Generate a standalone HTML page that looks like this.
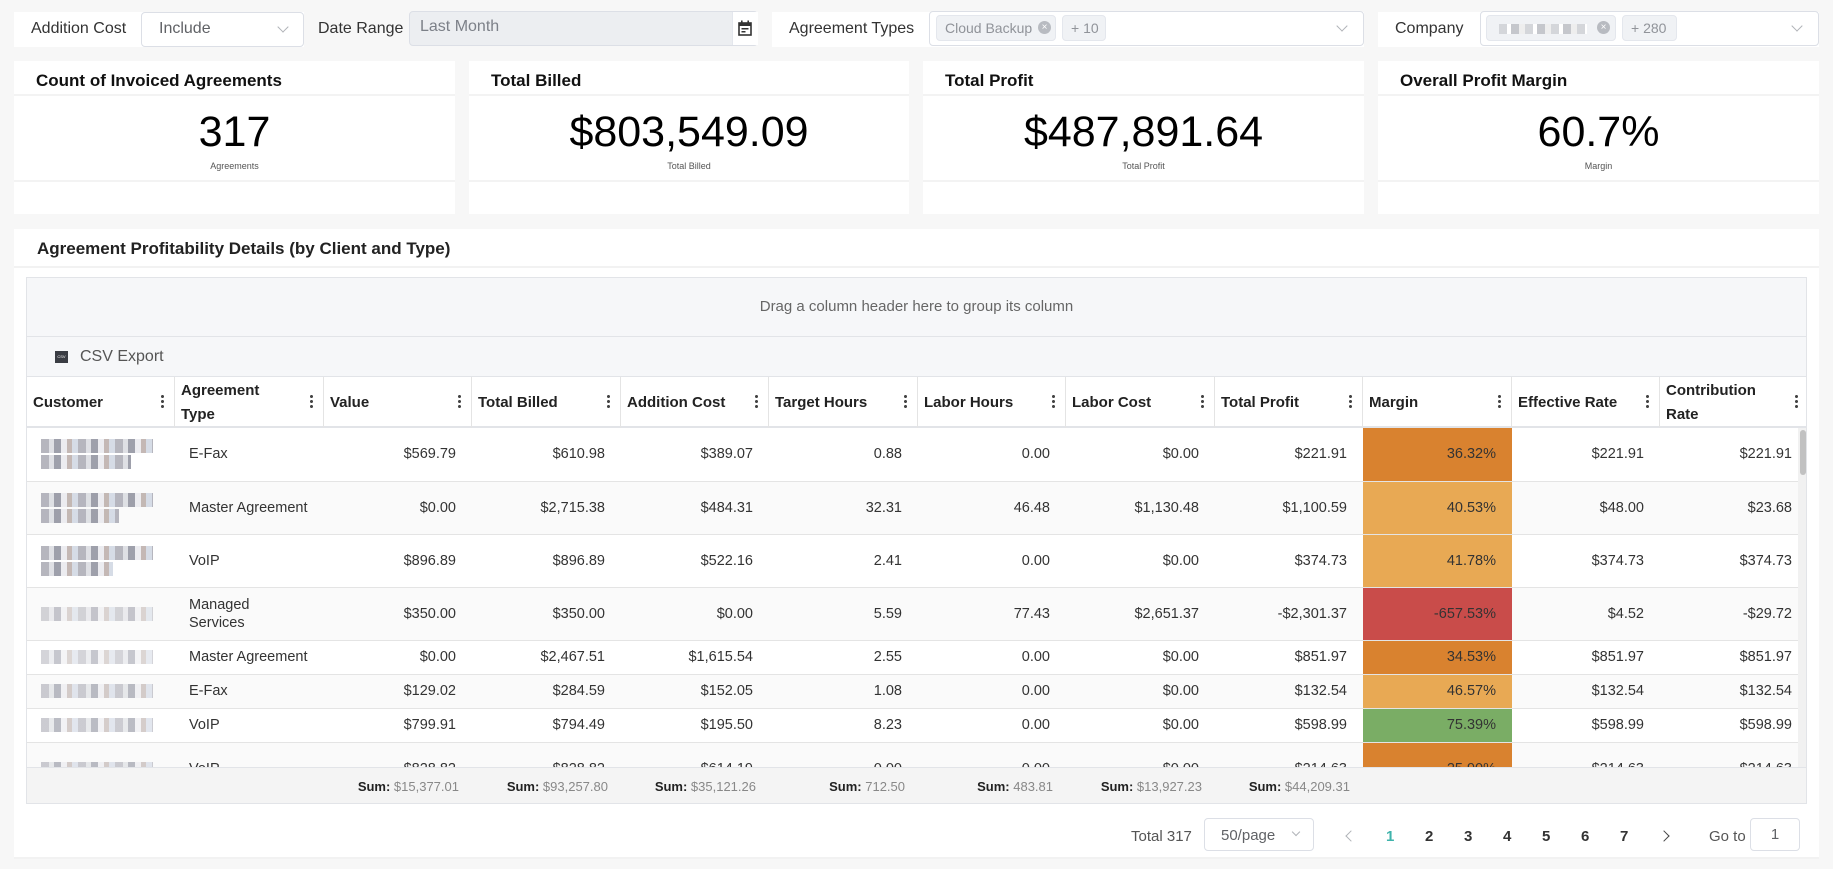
<!DOCTYPE html>
<html><head><meta charset="utf-8"><style>
*{box-sizing:border-box;margin:0;padding:0}
body{width:1833px;height:869px;background:#f7f7f7;font-family:"Liberation Sans",sans-serif;color:#222;position:relative;overflow:hidden}
.abs{position:absolute}
.box{position:absolute;background:#fff}
.lbl{position:absolute;font-size:16px;color:#333}
.inp{position:absolute;border:1px solid #dcdfe6;border-radius:4px;background:#fff;font-size:16px;color:#606266}
.chev{position:absolute;width:8px;height:8px;border-right:1.3px solid #b0b3b8;border-bottom:1.3px solid #b0b3b8;transform:rotate(45deg)}
.tag{position:absolute;background:#f0f2f5;border:1px solid #e4e7ed;border-radius:4px;font-size:14px;color:#909399;height:26px;line-height:24px;padding:0 8px;white-space:nowrap}
.card h3{position:absolute;left:22px;top:10px;font-size:17px;font-weight:bold;color:#111}
.card .big{position:absolute;left:0;right:0;top:47px;text-align:center;font-size:43px;color:#000}
.card .cap{position:absolute;left:0;right:0;top:100px;text-align:center;font-size:9px;color:#555}
.card .l1{position:absolute;left:0;right:0;top:33px;height:2px;background:#f3f3f3}
.card .l2{position:absolute;left:0;right:0;top:119px;height:2px;background:#f3f3f3}
table{border-collapse:collapse;table-layout:fixed;position:absolute;left:0;top:0}
td{font-size:14.5px;color:#333;text-align:right;padding:0 16px 0 12px;border-bottom:1px solid #e4e4e4;overflow:hidden;white-space:nowrap}
td.t{text-align:left;line-height:18px;padding-left:14px;padding-right:4px}
.th{position:absolute;top:0;height:51px;border-right:1px solid #e4e4e4;font-size:15px;font-weight:bold;color:#222;padding:0 0 0 6px;display:flex;align-items:center;line-height:24px}
.kb{position:absolute;right:10px;top:17px;width:3px;height:15px;background:radial-gradient(circle,#444 1.4px,transparent 1.6px) 0 0/3px 5px repeat-y}
.cust{display:block;height:14px;width:112px;margin:2px 0;background:repeating-linear-gradient(90deg,#a9a9b3 0 8px,#d9dbe0 8px 13px,#8d8f9c 13px 20px,#e9e9ee 20px 26px,#b9aca8 26px 31px,#cfd6e2 31px 37px);opacity:.85}
.sum{position:absolute;top:0;height:38px;line-height:38px;font-size:13px;color:#888;text-align:right}
.sum b{color:#222}
.pg{position:absolute;top:828px;font-size:15px;font-weight:bold;color:#333}
</style></head><body>

<div class="box" style="left:14px;top:12px;width:290px;height:35px"></div>
<div class="lbl" style="left:31px;top:20px">Addition Cost</div>
<div class="inp" style="left:141px;top:12px;width:163px;height:35px"><span class="abs" style="left:17px;top:7px">Include</span><span class="chev" style="left:137px;top:10px"></span></div>
<div class="lbl" style="left:318px;top:20px">Date Range</div>
<div class="inp" style="left:409px;top:11px;width:349px;height:35px;background:#eceef1"><span class="abs" style="left:10px;top:6px;color:#7c8088">Last Month</span>
<div class="abs" style="left:322px;top:0;width:26px;height:33px;background:#fff;border-left:1px solid #e4e7ed"></div>
<svg class="abs" style="left:328px;top:8px" width="14" height="16" viewBox="0 0 14 16"><rect x="1" y="3" width="12" height="12" fill="none" stroke="#333" stroke-width="1.6"/><rect x="1" y="3" width="12" height="3" fill="#333"/><rect x="3" y="0.5" width="1.6" height="4" fill="#333"/><rect x="9.4" y="0.5" width="1.6" height="4" fill="#333"/><rect x="3.5" y="8" width="7" height="1.5" fill="#333"/><rect x="3.5" y="11" width="4" height="1.5" fill="#333"/></svg></div>
<div class="box" style="left:772px;top:12px;width:592px;height:35px"></div>
<div class="lbl" style="left:789px;top:20px">Agreement Types</div>
<div class="inp" style="left:929px;top:11px;width:435px;height:35px"><span class="chev" style="left:408px;top:10px"></span></div>
<div class="tag" style="left:936px;top:15px;width:120px">Cloud Backup<span class="abs" style="left:101px;top:5px;width:13px;height:13px;border-radius:50%;background:#b8bbc1;color:#fff;font-size:10px;line-height:13px;text-align:center">×</span></div>
<div class="tag" style="left:1062px;top:15px;width:44px">+ 10</div>
<div class="box" style="left:1378px;top:12px;width:441px;height:35px"></div>
<div class="lbl" style="left:1395px;top:20px">Company</div>
<div class="inp" style="left:1480px;top:11px;width:339px;height:35px"><span class="chev" style="left:312px;top:10px"></span></div>
<div class="tag" style="left:1486px;top:15px;width:130px"><span class="abs" style="left:12px;top:8px;width:88px;height:10px;background:repeating-linear-gradient(90deg,#d4d6da 0 8px,#fff 8px 12px,#c5c7cc 12px 20px,#eee 20px 26px)"></span><span class="abs" style="left:110px;top:5px;width:13px;height:13px;border-radius:50%;background:#b8bbc1;color:#fff;font-size:10px;line-height:13px;text-align:center">×</span></div>
<div class="tag" style="left:1622px;top:15px;width:55px">+ 280</div>

<div class="box card" style="left:14px;top:61px;width:441px;height:153px"><h3>Count of Invoiced Agreements</h3><div class="l1"></div><div class="big">317</div><div class="cap">Agreements</div><div class="l2"></div></div>
<div class="box card" style="left:469px;top:61px;width:440px;height:153px"><h3>Total Billed</h3><div class="l1"></div><div class="big">$803,549.09</div><div class="cap">Total Billed</div><div class="l2"></div></div>
<div class="box card" style="left:923px;top:61px;width:441px;height:153px"><h3>Total Profit</h3><div class="l1"></div><div class="big">$487,891.64</div><div class="cap">Total Profit</div><div class="l2"></div></div>
<div class="box card" style="left:1378px;top:61px;width:441px;height:153px"><h3>Overall Profit Margin</h3><div class="l1"></div><div class="big">60.7%</div><div class="cap">Margin</div><div class="l2"></div></div>

<div class="box" style="left:14px;top:229px;width:1805px;height:630px">
<div class="abs" style="left:23px;top:10px;font-size:17px;font-weight:bold;color:#222">Agreement Profitability Details (by Client and Type)</div>
<div class="abs" style="left:0;right:0;top:37px;height:2px;background:#f2f2f2"></div>
<div class="abs" style="left:0;right:0;top:628px;height:2px;background:#f2f2f2"></div>
</div>

<div class="abs" style="left:26px;top:277px;width:1781px;height:527px;border:1px solid #e2e4e8;background:#f6f7f9;overflow:hidden">
<div class="abs" style="left:0;right:0;top:0;height:58px;line-height:58px;text-align:center;font-size:15px;color:#666">Drag a column header here to group its column</div>
<div class="abs" style="left:0;right:0;top:58px;height:1px;background:#e2e4e8"></div>
<div class="abs" style="left:28px;top:73px;width:13px;height:12px;background:#3a3d44;color:#fff;font-size:4px;line-height:12px;text-align:center">CSV</div>
<div class="abs" style="left:53px;top:70px;font-size:16px;color:#555">CSV Export</div>
<div class="abs" style="left:0;top:98px;width:1781px;height:52px;background:#fff;border-top:1px solid #e2e4e8;border-bottom:2px solid #e2e4e8">
<div class="th" style="left:0;width:148px">Customer<span class="kb"></span></div>
<div class="th" style="left:148px;width:149px">Agreement<br>Type<span class="kb"></span></div>
<div class="th" style="left:297px;width:148px">Value<span class="kb"></span></div>
<div class="th" style="left:445px;width:149px">Total Billed<span class="kb"></span></div>
<div class="th" style="left:594px;width:148px">Addition Cost<span class="kb"></span></div>
<div class="th" style="left:742px;width:149px">Target Hours<span class="kb"></span></div>
<div class="th" style="left:891px;width:148px">Labor Hours<span class="kb"></span></div>
<div class="th" style="left:1039px;width:149px">Labor Cost<span class="kb"></span></div>
<div class="th" style="left:1188px;width:148px">Total Profit<span class="kb"></span></div>
<div class="th" style="left:1336px;width:149px">Margin<span class="kb"></span></div>
<div class="th" style="left:1485px;width:148px">Effective Rate<span class="kb"></span></div>
<div class="th" style="left:1633px;width:148px;border-right:none">Contribution<br>Rate<span class="kb"></span></div>
</div>
<div class="abs" style="left:0;top:150px;width:1781px;height:339px;background:#fff;overflow:hidden">
<table style="width:1781px">
<colgroup><col style="width:148px"><col style="width:149px"><col style="width:148px"><col style="width:149px"><col style="width:148px"><col style="width:149px"><col style="width:148px"><col style="width:149px"><col style="width:148px"><col style="width:149px"><col style="width:148px"><col style="width:148px"></colgroup>
<tr style="height:53px"><td class="t"><span class="cust"></span><span class="cust" style="width:90px"></span></td><td class="t">E-Fax</td><td>$569.79</td><td>$610.98</td><td>$389.07</td><td>0.88</td><td>0.00</td><td>$0.00</td><td>$221.91</td><td style="background:#d9822f">36.32%</td><td>$221.91</td><td>$221.91</td></tr>
<tr style="height:53px;background:#fafafa"><td class="t"><span class="cust"></span><span class="cust" style="width:78px"></span></td><td class="t">Master Agreement</td><td>$0.00</td><td>$2,715.38</td><td>$484.31</td><td>32.31</td><td>46.48</td><td>$1,130.48</td><td>$1,100.59</td><td style="background:#e8a954">40.53%</td><td>$48.00</td><td>$23.68</td></tr>
<tr style="height:53px"><td class="t"><span class="cust"></span><span class="cust" style="width:72px"></span></td><td class="t">VoIP</td><td>$896.89</td><td>$896.89</td><td>$522.16</td><td>2.41</td><td>0.00</td><td>$0.00</td><td>$374.73</td><td style="background:#e8a954">41.78%</td><td>$374.73</td><td>$374.73</td></tr>
<tr style="height:53px;background:#fafafa"><td class="t"><span class="cust" style="opacity:.5"></span></td><td class="t">Managed<br>Services</td><td>$350.00</td><td>$350.00</td><td>$0.00</td><td>5.59</td><td>77.43</td><td>$2,651.37</td><td>-$2,301.37</td><td style="background:#c94c4a">-657.53%</td><td>$4.52</td><td>-$29.72</td></tr>
<tr style="height:34px"><td class="t"><span class="cust" style="opacity:.5"></span></td><td class="t">Master Agreement</td><td>$0.00</td><td>$2,467.51</td><td>$1,615.54</td><td>2.55</td><td>0.00</td><td>$0.00</td><td>$851.97</td><td style="background:#d9822f">34.53%</td><td>$851.97</td><td>$851.97</td></tr>
<tr style="height:34px;background:#fafafa"><td class="t"><span class="cust" style="opacity:.6"></span></td><td class="t">E-Fax</td><td>$129.02</td><td>$284.59</td><td>$152.05</td><td>1.08</td><td>0.00</td><td>$0.00</td><td>$132.54</td><td style="background:#e8a954">46.57%</td><td>$132.54</td><td>$132.54</td></tr>
<tr style="height:34px"><td class="t"><span class="cust" style="opacity:.6"></span></td><td class="t">VoIP</td><td>$799.91</td><td>$794.49</td><td>$195.50</td><td>8.23</td><td>0.00</td><td>$0.00</td><td>$598.99</td><td style="background:#7aad65">75.39%</td><td>$598.99</td><td>$598.99</td></tr>
<tr style="height:53px;background:#fafafa"><td class="t"><span class="cust" style="opacity:.6"></span></td><td class="t">VoIP</td><td>$828.82</td><td>$828.82</td><td>$614.19</td><td>0.00</td><td>0.00</td><td>$0.00</td><td>$214.63</td><td style="background:#d9822f">25.90%</td><td>$214.63</td><td>$214.63</td></tr>
</table>
<div class="abs" style="right:0;top:0;width:10px;height:339px;background:#f1f1f1"></div>
<div class="abs" style="right:2px;top:2px;width:6px;height:45px;background:#c1c1c1;border-radius:3px"></div>
</div>
<div class="abs" style="left:0;top:489px;width:1781px;height:38px;background:#f4f4f4;border-top:1px solid #e2e4e8">
<div class="sum" style="left:297px;width:135px"><b>Sum:</b> $15,377.01</div>
<div class="sum" style="left:445px;width:136px"><b>Sum:</b> $93,257.80</div>
<div class="sum" style="left:594px;width:135px"><b>Sum:</b> $35,121.26</div>
<div class="sum" style="left:742px;width:136px"><b>Sum:</b> 712.50</div>
<div class="sum" style="left:891px;width:135px"><b>Sum:</b> 483.81</div>
<div class="sum" style="left:1039px;width:136px"><b>Sum:</b> $13,927.23</div>
<div class="sum" style="left:1188px;width:135px"><b>Sum:</b> $44,209.31</div>
</div>
</div>

<div class="abs" style="left:1131px;top:828px;font-size:15px;color:#555">Total 317</div>
<div class="inp" style="left:1204px;top:818px;width:110px;height:33px;font-size:15px"><span class="abs" style="left:16px;top:8px">50/page</span><span class="chev" style="left:88px;top:10px;width:6px;height:6px"></span></div>
<div class="abs" style="left:1347px;top:828px;width:8px;height:8px;border-left:1.5px solid #b0b3b8;border-bottom:1.5px solid #b0b3b8;transform:rotate(45deg);margin-top:4px"></div>
<div class="pg" style="left:1386px;color:#3fb3ab">1</div>
<div class="pg" style="left:1425px">2</div>
<div class="pg" style="left:1464px">3</div>
<div class="pg" style="left:1503px">4</div>
<div class="pg" style="left:1542px">5</div>
<div class="pg" style="left:1581px">6</div>
<div class="pg" style="left:1620px">7</div>
<div class="abs" style="left:1660px;top:832px;width:8px;height:8px;border-right:1.5px solid #444;border-top:1.5px solid #444;transform:rotate(45deg)"></div>
<div class="abs" style="left:1709px;top:828px;font-size:15px;color:#555">Go to</div>
<div class="inp" style="left:1750px;top:818px;width:50px;height:33px;text-align:center;line-height:31px;font-size:15px">1</div>
</body></html>
